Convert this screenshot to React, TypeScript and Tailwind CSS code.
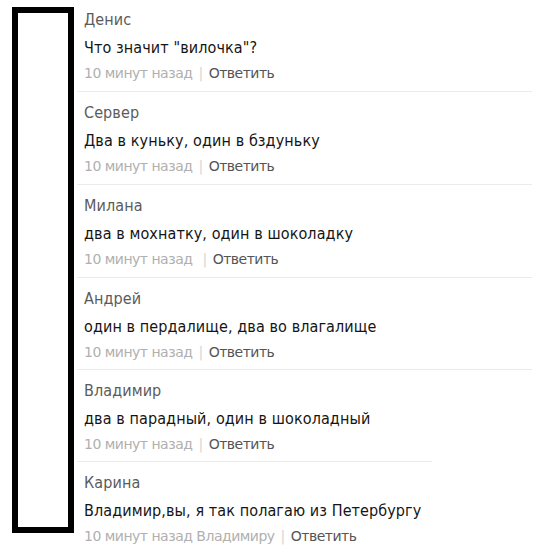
import React from "react";

type Item = { name: string; text: string; meta: string; pb: string; sep: string | null; gap?: string };

const items: Item[] = [
  { name: "Денис", text: "Что значит \"вилочка\"?", meta: "10 минут назад", pb: "pb-[8px]", sep: "w-[455px]" },
  { name: "Сервер", text: "Два в куньку, один в бздуньку", meta: "10 минут назад", pb: "pb-[8px]", sep: "w-[455px]" },
  { name: "Милана", text: "два в мохнатку, один в шоколадку", meta: "10 минут назад", pb: "pb-[8px]", sep: "w-[455px]", gap: "ml-[10px] mr-[6px]" },
  { name: "Андрей", text: "один в пердалище, два во влагалище", meta: "10 минут назад", pb: "pb-[7px]", sep: "w-[455px]" },
  { name: "Владимир", text: "два в парадный, один в шоколадный", meta: "10 минут назад", pb: "pb-[7px]", sep: "w-[355px]" },
  { name: "Карина", text: "Владимир,вы, я так полагаю из Петербургу", meta: "10 минут назад Владимиру", pb: "pb-[7px]", sep: null },
];

export default function App() {
  return (
    <div
      className="w-[545px] h-[554px] bg-white overflow-hidden flex"
      style={{ fontFamily: '"DejaVu Sans", Verdana, sans-serif' }}
    >
      <div className="ml-[12px] mt-[7px] w-[62px] h-[526px] border-[6px] border-black bg-white shrink-0" />
      <div className="ml-[3px] flex flex-col">
        {items.map((it, i) => (
          <div key={i} className="flex flex-col">
            <div className={`pl-[7px] ${i === 0 ? "pt-[11px]" : "pt-[12px]"} ${it.pb} flex flex-col`}>
              <div className="font-stretch-condensed text-[16px] leading-[18px] tracking-[0.1px] text-[#5b5b5b]">{it.name}</div>
              <div className="font-stretch-condensed mt-[9px] text-[16px] leading-[20px] tracking-[0.1px] text-[#151515] whitespace-nowrap">{it.text}</div>
              <div className="mt-[5px] text-[14px] leading-[20px] tracking-[-0.5px] whitespace-nowrap">
                <span className="text-[#b0b0b0]">{it.meta}</span>
                <span className={`text-[#d6d6d6] ${it.gap ?? "mx-[6px]"}`}>|</span>
                <span className="text-[#555555]">Ответить</span>
              </div>
            </div>
            {it.sep && <div className={`h-px bg-[#ebebeb] ${it.sep}`} />}
          </div>
        ))}
      </div>
    </div>
  );
}
